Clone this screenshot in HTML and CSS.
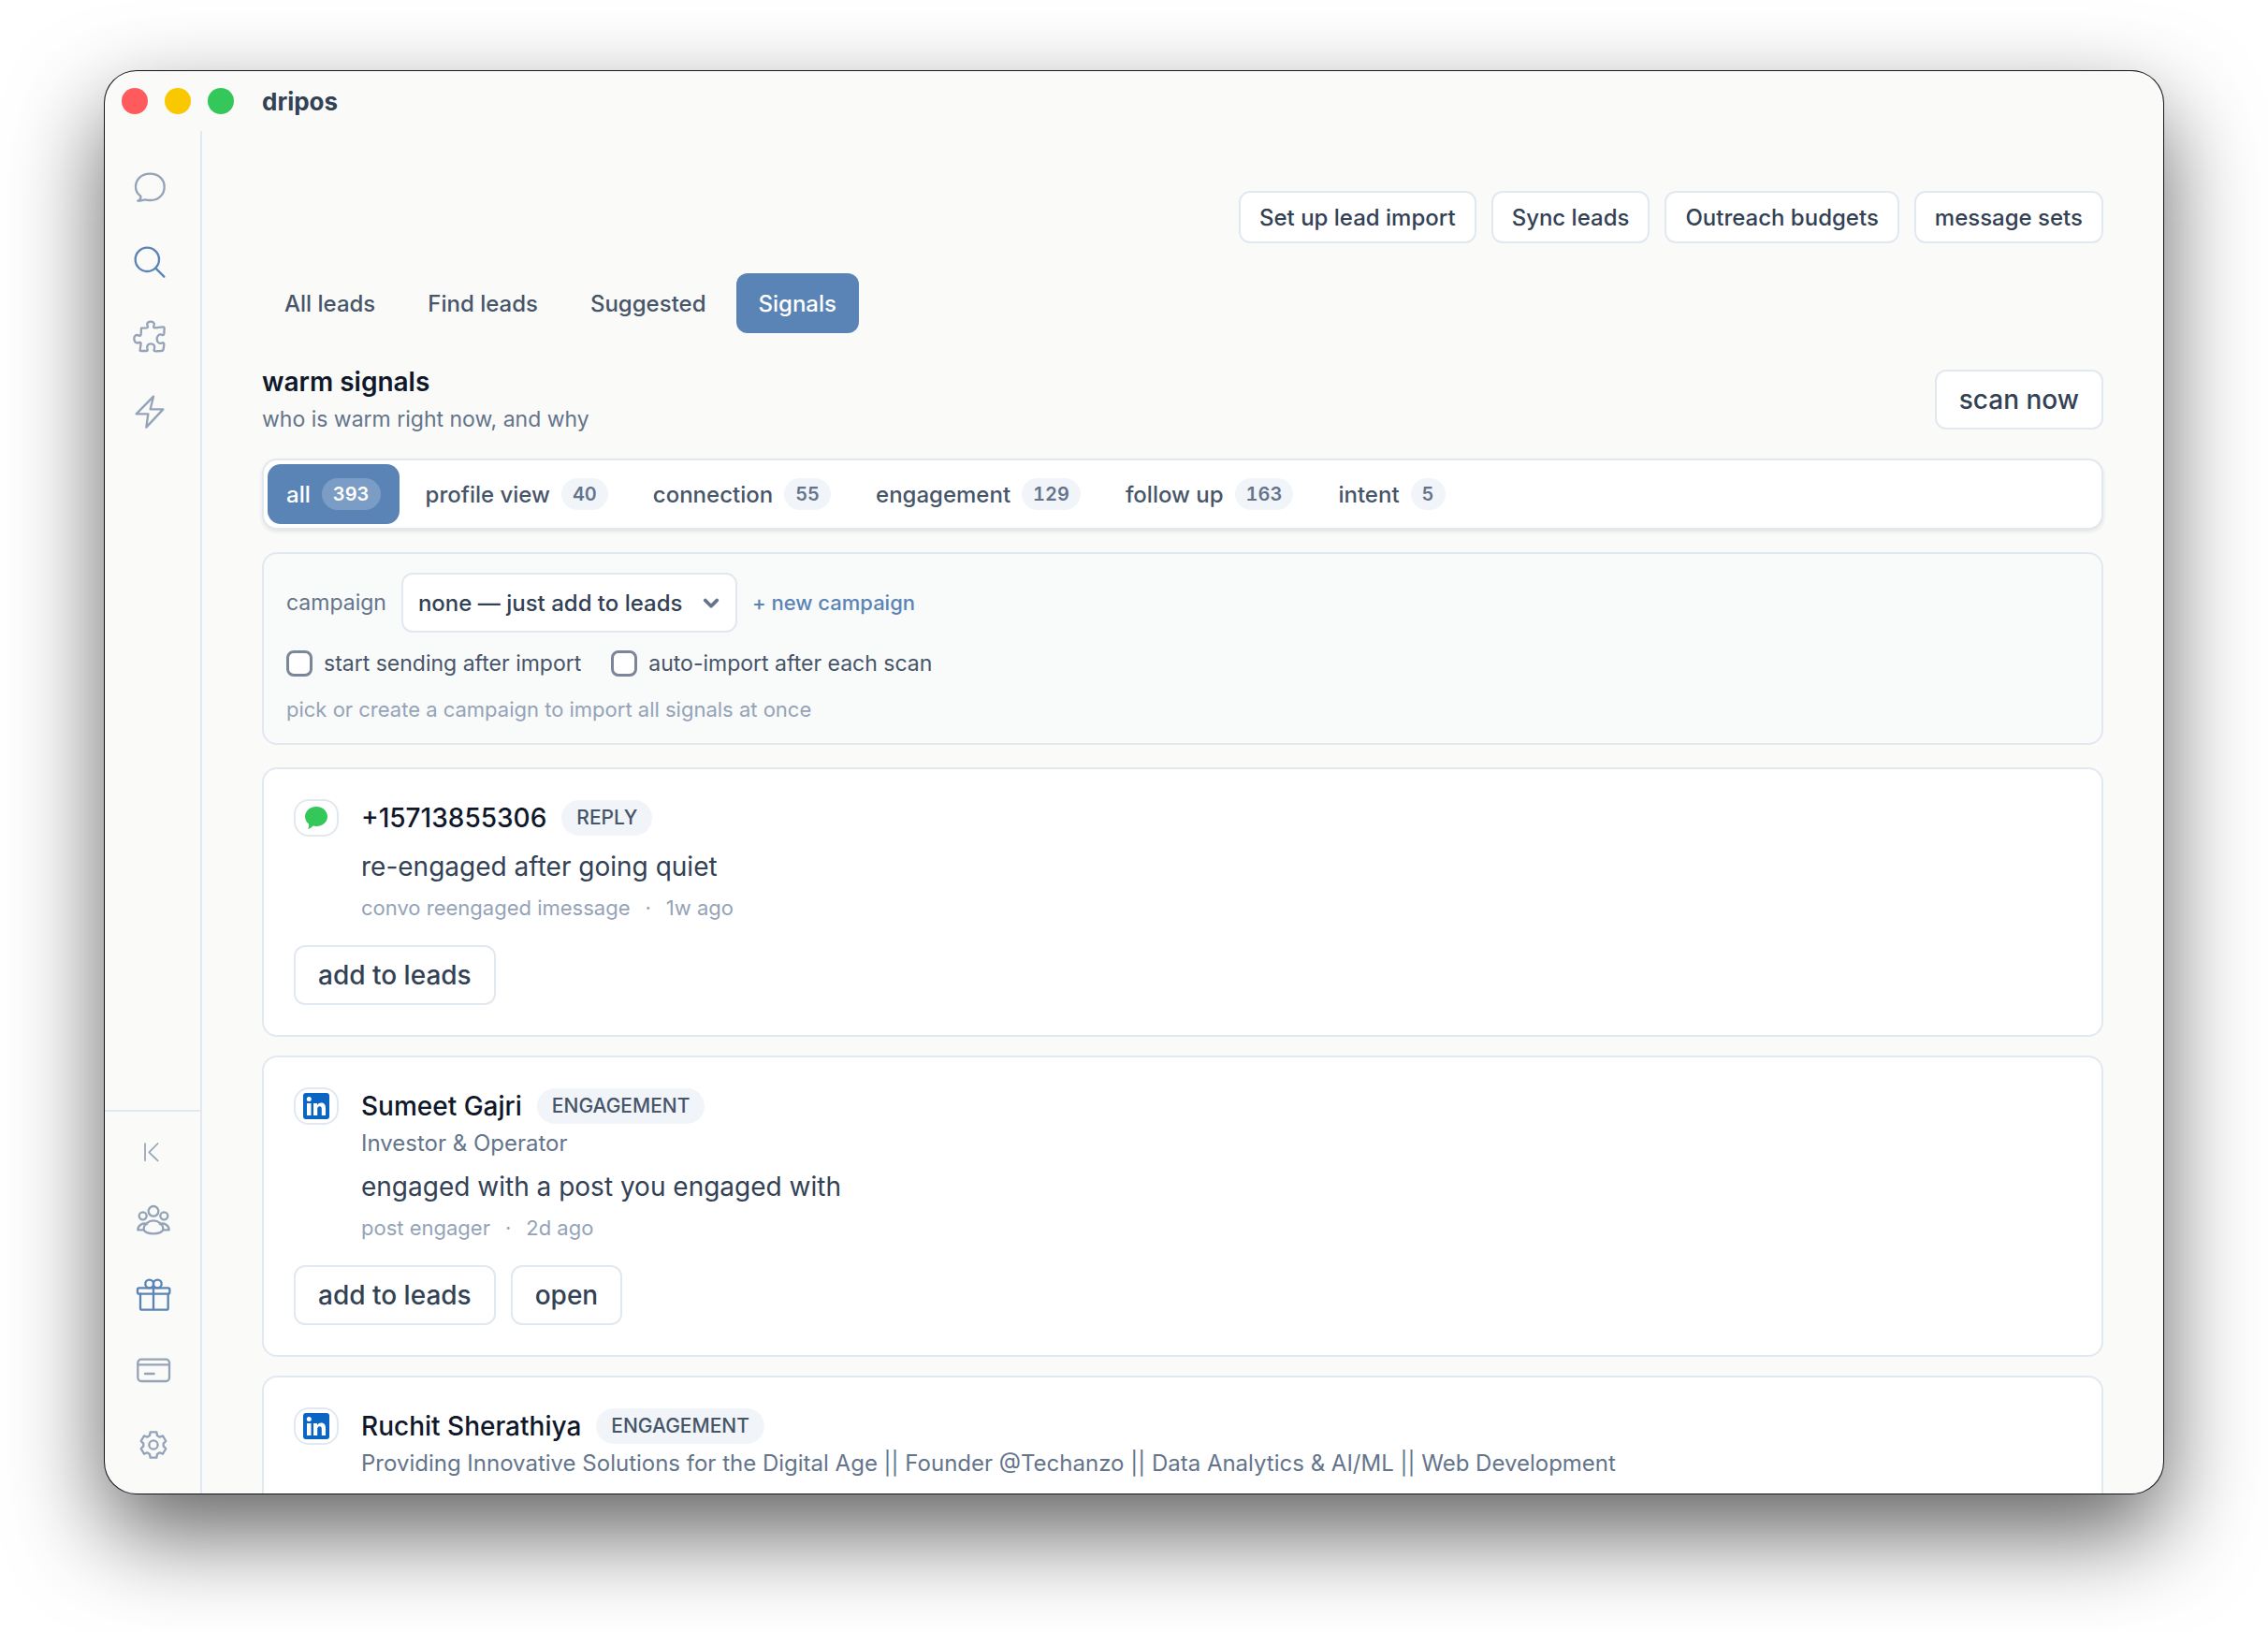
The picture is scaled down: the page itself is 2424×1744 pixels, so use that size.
FILE: index.html
```
<!DOCTYPE html>
<html lang="en">
<head>
  <meta charset="UTF-8" />
  <meta name="viewport" content="width=device-width, initial-scale=1" />
  <title>dripos</title>
  <link rel="stylesheet" href="styles.css">
</head>
<body>
  <div class="window">
    <header class="titlebar">
      <div class="traffic">
        <span class="dot red"></span>
        <span class="dot yellow"></span>
        <span class="dot green"></span>
      </div>
      <span class="app-name">dripos</span>
    </header>

    <div class="layout">
      <aside class="sidebar">
        <nav class="nav-top">
          <button class="nav-btn" aria-label="Chat">
            <svg viewBox="0 0 108 108"><path d="M16 98C24 99 32 94 40 94C46 96 50 96 56 96C84 96 101 76 101 53C101 28 82 11 55 11C28 11 9 28 9 54C9 66 16 76 25 83C26 90 22 96 16 98Z"/></svg>
          </button>
          <button class="nav-btn active" aria-label="Leads">
            <svg viewBox="0 0 108 108"><circle cx="46" cy="46" r="38"/><path d="M73 74L100 101"/></svg>
          </button>
          <button class="nav-btn" aria-label="Integrations">
            <svg viewBox="0 0 108 108"><path d="M27 26L44 25C50 24 48 20 46 16C44 8 52 5 57 5C64 5 70 9 68 16C66 21 65 25 70 25L97 22C101 22 101 24 101 27L100 44C99 50 96 49 92 47C84 44 77 52 77 61C77 70 84 77 92 74C96 72 100 72 100 78L98 94C97 99 95 99 92 99L72 100C67 100 67 96 69 92C72 82 66 76 57 76C49 76 44 82 46 91C48 96 48 99 44 99L26 99C23 99 22 97 23 95L26 75C26 70 22 71 18 73C9 75 4 68 4 60C4 51 10 46 18 49C22 51 26 51 26 46Z"/></svg>
          </button>
          <button class="nav-btn" aria-label="Automations">
            <svg viewBox="0 0 108 108"><path d="M66 5L11 61H49L43 104L97 46H56Z"/></svg>
          </button>
        </nav>
        <div class="nav-bottom">
          <button class="nav-btn collapse" aria-label="Collapse sidebar">
            <svg viewBox="0 0 108 108"><path d="M27 27V82M68 27L40 55L68 82"/></svg>
          </button>
          <button class="nav-btn" aria-label="Team">
            <svg viewBox="0 0 108 108"><circle cx="54" cy="25" r="16"/><circle cx="20" cy="40" r="12"/><circle cx="88" cy="40" r="12"/><path d="M54 55C70 55 85 68 85 82C85 92 70 97 54 97C38 97 23 92 23 82C23 68 38 55 54 55Z"/><path d="M33 66C19 61 4 70 4 85H24M75 66C89 61 104 70 104 85H84"/></svg>
          </button>
          <button class="nav-btn active" aria-label="Rewards">
            <svg viewBox="0 0 108 108"><rect x="3" y="31" width="103" height="19" rx="5"/><path d="M12 50V95Q12 101 18 101H95Q101 101 101 95V50M54 31V101"/><circle cx="41" cy="18" r="13"/><circle cx="67" cy="18" r="13"/></svg>
          </button>
          <button class="nav-btn" aria-label="Billing">
            <svg viewBox="0 0 108 108"><rect x="4" y="20" width="101" height="70" rx="11"/><path d="M4 37H105M27 66H56"/></svg>
          </button>
          <button class="nav-btn" aria-label="Settings">
            <svg viewBox="0 0 108 108"><path d="M44 13H64L66 24L74 29L84 25L94 42L86 50V58L94 66L84 83L74 79L66 84L64 95H44L42 84L34 79L24 83L14 66L22 58V50L14 42L24 25L34 29L42 24Z"/><circle cx="54" cy="54" r="14"/></svg>
          </button>
        </div>
      </aside>

      <main class="main">
        <div class="actions">
          <button class="btn btn-sm">Set up lead import</button>
          <button class="btn btn-sm">Sync leads</button>
          <button class="btn btn-sm">Outreach budgets</button>
          <button class="btn btn-sm">message sets</button>
        </div>

        <div class="tabs">
          <button class="tab">All leads</button>
          <button class="tab">Find leads</button>
          <button class="tab">Suggested</button>
          <button class="tab active">Signals</button>
        </div>

        <div class="section-head">
          <div>
            <h1>warm signals</h1>
            <p>who is warm right now, and why</p>
          </div>
          <button class="btn">scan now</button>
        </div>

        <div class="filters">
          <button class="filter active">all <span class="count">393</span></button>
          <button class="filter">profile view <span class="count">40</span></button>
          <button class="filter">connection <span class="count">55</span></button>
          <button class="filter">engagement <span class="count">129</span></button>
          <button class="filter">follow up <span class="count">163</span></button>
          <button class="filter">intent <span class="count">5</span></button>
        </div>

        <section class="panel">
          <div class="campaign-row">
            <label for="campaign">campaign</label>
            <div class="select-wrap">
              <select id="campaign">
                <option>none — just add to leads</option>
              </select>
              <svg class="chevron" viewBox="0 0 16 16"><path d="M3 6L8 11L13 6"/></svg>
            </div>
            <a href="#">+ new campaign</a>
          </div>
          <div class="check-row">
            <label class="check"><input type="checkbox"> start sending after import</label>
            <label class="check"><input type="checkbox"> auto-import after each scan</label>
          </div>
          <p class="hint">pick or create a campaign to import all signals at once</p>
        </section>

        <div class="cards">
          <article class="card">
            <div class="card-top">
              <span class="source">
                <svg viewBox="0 0 24 24"><path fill="#34c759" d="M12 0C18.600 0 24 4.700 24 10.500C24 16.500 18.600 21 12 21C10.700 21 9.600 20.800 8.500 20.500C7 22.300 5 23.500 3 24C4 22.500 4.400 20.500 4 18.500C1.500 16.600 0 13.700 0 10.500C0 4.700 5.400 0 12 0Z"/></svg>
              </span>
              <h2>+15713855306</h2>
              <span class="tag">REPLY</span>
            </div>
            <div class="card-body">
              <p class="reason">re-engaged after going quiet</p>
              <p class="meta"><span>convo reengaged imessage</span><span>·</span><span>1w ago</span></p>
            </div>
            <div class="card-actions">
              <button class="btn">add to leads</button>
            </div>
          </article>

          <article class="card">
            <div class="card-top">
              <span class="source">
                <svg class="linkedin" viewBox="0 0 28 28"><rect width="28" height="28" rx="3" fill="#0a66c2"/><circle cx="6.300" cy="6.500" r="2.500" fill="#fff"/><path fill="#fff" d="M4 11H8.500V24H4ZM11 11H15V13C16 11.300 17.500 10.500 19.300 10.500C23 10.500 24 13 24 16.500V24H19.800V17.300C19.800 15.500 19.500 14.200 17.800 14.200C16 14.200 15.200 15.500 15.200 17.300V24H11Z"/></svg>
              </span>
              <h2>Sumeet Gajri</h2>
              <span class="tag">ENGAGEMENT</span>
            </div>
            <div class="card-body">
              <p class="headline">Investor &amp; Operator</p>
              <p class="reason">engaged with a post you engaged with</p>
              <p class="meta"><span>post engager</span><span>·</span><span>2d ago</span></p>
            </div>
            <div class="card-actions">
              <button class="btn">add to leads</button>
              <button class="btn">open</button>
            </div>
          </article>

          <article class="card">
            <div class="card-top">
              <span class="source">
                <svg class="linkedin" viewBox="0 0 28 28"><rect width="28" height="28" rx="3" fill="#0a66c2"/><circle cx="6.300" cy="6.500" r="2.500" fill="#fff"/><path fill="#fff" d="M4 11H8.500V24H4ZM11 11H15V13C16 11.300 17.500 10.500 19.300 10.500C23 10.500 24 13 24 16.500V24H19.800V17.300C19.800 15.500 19.500 14.200 17.800 14.200C16 14.200 15.200 15.500 15.200 17.300V24H11Z"/></svg>
              </span>
              <h2>Ruchit Sherathiya</h2>
              <span class="tag">ENGAGEMENT</span>
            </div>
            <div class="card-body">
              <p class="headline">Providing Innovative Solutions for the Digital Age || Founder @Techanzo || Data Analytics &amp; AI/ML || Web Development</p>
            </div>
          </article>
        </div>
      </main>
    </div>
  </div>
</body>
</html>
```
FILE: styles.css
```
* {
  box-sizing: border-box;
}

body {
  margin: 0;
  height: 100vh;
  padding: 76px 112px 148px;
  background: #fff;
  font-family: Inter, sans-serif;
  font-size: 24px;
  color: #334155;
}

h1,
h2,
p {
  margin: 0;
}

button,
select {
  font-family: inherit;
  cursor: pointer;
}

.window {
  height: 100%;
  display: flex;
  flex-direction: column;
  background: #fafaf9;
  border-radius: 34px;
  overflow: hidden;
  box-shadow: 0 0 0 1px #14161c, 0 42px 100px rgba(0, 0, 0, 0.62);
}

/* title bar */
.titlebar {
  flex: none;
  height: 64px;
  display: flex;
  align-items: center;
  padding-left: 18px;
}

.traffic {
  display: flex;
  gap: 18px;
  width: 150px;
}

.dot {
  width: 28px;
  height: 28px;
  border-radius: 50%;
}

.red {
  background: #ff5a5c;
}

.yellow {
  background: #fac800;
}

.green {
  background: #34c759;
}

.app-name {
  font-size: 26px;
  font-weight: 700;
}

.layout {
  flex: 1;
  min-height: 0;
  display: flex;
}

/* sidebar */
.sidebar {
  flex: none;
  width: 104px;
  border-right: 2px solid #e2e8f0;
  display: flex;
  flex-direction: column;
  justify-content: space-between;
}

.nav-top {
  width: 96px;
  padding-top: 20px;
}

.nav-bottom {
  border-top: 2px solid #e2e8f0;
  padding: 10px 0 12px 2px;
}

.nav-btn {
  width: 100%;
  height: 80px;
  padding: 0;
  border: none;
  background: none;
  display: flex;
  align-items: center;
  justify-content: center;
  color: #94a3b8;
}

.nav-btn.active {
  color: #5b84b6;
}

.nav-btn.collapse {
  height: 66px;
}

.nav-btn svg {
  width: 36px;
  height: 36px;
  fill: none;
  stroke: currentColor;
  stroke-width: 7;
  stroke-linecap: round;
  stroke-linejoin: round;
  overflow: visible;
}

.nav-btn.collapse svg {
  stroke-width: 5;
}

/* main */
.main {
  flex: 1;
  min-width: 0;
  padding: 64px 64px 0;
  overflow: hidden;
}

.btn {
  height: 64px;
  padding: 0 24px;
  border: 2px solid #e2e8f0;
  border-radius: 12px;
  background: #fff;
  color: #334155;
  font-size: 28px;
  font-weight: 500;
}

.btn-sm {
  height: 56px;
  padding: 0 20px;
  font-size: 24px;
}

.actions {
  display: flex;
  justify-content: flex-end;
  gap: 16px;
}

.tabs {
  display: flex;
  gap: 8px;
  margin: 32px 0;
}

.tab {
  height: 64px;
  padding: 0 24px;
  border: none;
  border-radius: 12px;
  background: none;
  color: #475569;
  font-size: 24px;
  font-weight: 500;
}

.tab.active {
  background: #5b84b6;
  color: #fff;
}

.section-head {
  display: flex;
  align-items: center;
  justify-content: space-between;
}

.section-head h1 {
  font-size: 28px;
  line-height: 40px;
  font-weight: 600;
  color: #0f172a;
}

.section-head p {
  margin-top: 2px;
  font-size: 23px;
  line-height: 36px;
  color: #64748b;
}

.filters {
  display: flex;
  gap: 8px;
  margin: 24px 0;
  padding: 4px;
  border: 2px solid #e2e8f0;
  border-radius: 16px;
  background: #fff;
  box-shadow: 0 2px 4px rgba(15, 23, 42, 0.1);
}

.filter {
  height: 64px;
  padding: 0 20px;
  border: none;
  border-radius: 14px;
  background: none;
  color: #475569;
  font-size: 24px;
  font-weight: 500;
  display: flex;
  align-items: center;
  gap: 12px;
}

.filter.active {
  background: #5b84b6;
  color: #fff;
}

.count {
  height: 34px;
  line-height: 34px;
  padding: 0 12px;
  border-radius: 17px;
  background: #f1f5f9;
  color: #64748b;
  font-size: 20px;
  font-weight: 600;
  font-variant-numeric: tabular-nums;
}

.filter.active .count {
  background: rgba(255, 255, 255, 0.2);
  color: #fff;
}

/* campaign panel */
.panel {
  padding: 20px 24px;
  border: 2px solid #e2e8f0;
  border-radius: 16px;
  background: #f9fafa;
}

.campaign-row {
  display: flex;
  align-items: center;
  gap: 16px;
}

.campaign-row label {
  font-size: 23px;
  color: #64748b;
}

.campaign-row a {
  font-size: 22px;
  font-weight: 500;
  color: #5b84b6;
  text-decoration: none;
}

.select-wrap {
  position: relative;
}

.select-wrap select {
  appearance: none;
  height: 64px;
  padding: 0 56px 0 16px;
  border: 2px solid #e2e8f0;
  border-radius: 12px;
  background: #fff;
  color: #334155;
  font-size: 24px;
  font-weight: 500;
}

.chevron {
  position: absolute;
  right: 18px;
  top: 22px;
  width: 20px;
  height: 20px;
  fill: none;
  stroke: #64748b;
  stroke-width: 3;
  stroke-linecap: round;
  stroke-linejoin: round;
  pointer-events: none;
}

.check-row {
  display: flex;
  gap: 32px;
  margin: 16px 0;
}

.check {
  display: flex;
  align-items: center;
  gap: 12px;
  font-size: 23px;
  line-height: 34px;
  color: #475569;
}

.check input {
  appearance: none;
  width: 28px;
  height: 28px;
  margin: 0;
  border: 3px solid #7b8799;
  border-radius: 8px;
  background: #fff;
}

.hint {
  font-size: 22px;
  line-height: 32px;
  color: #94a3b8;
}

/* signal cards */
.cards {
  display: flex;
  flex-direction: column;
  gap: 20px;
  margin-top: 24px;
}

.card {
  padding: 32px;
  border: 2px solid #e2e8f0;
  border-radius: 16px;
  background: #fff;
}

.card-top {
  display: flex;
  align-items: center;
  height: 40px;
}

.source {
  width: 48px;
  height: 40px;
  margin-right: 24px;
  border: 2px solid #e2e8f0;
  border-radius: 16px;
  display: flex;
  align-items: center;
  justify-content: center;
}

.source svg {
  width: 24px;
  height: 24px;
}

.source .linkedin {
  width: 28px;
  height: 28px;
}

.card h2 {
  font-size: 28px;
  font-weight: 500;
  color: #0f172a;
}

.tag {
  height: 38px;
  line-height: 38px;
  margin-left: 16px;
  padding: 0 16px;
  border-radius: 19px;
  background: #f1f5f9;
  color: #475569;
  font-size: 21px;
  font-weight: 500;
}

.card-body {
  padding-left: 72px;
}

.headline {
  margin-top: 2px;
  line-height: 36px;
  color: #64748b;
}

.reason {
  margin-top: 12px;
  font-size: 28px;
  line-height: 40px;
}

.headline + .reason {
  margin-top: 8px;
}

.meta {
  display: flex;
  gap: 16px;
  margin-top: 8px;
  font-size: 22px;
  line-height: 32px;
  color: #94a3b8;
}

.card-actions {
  display: flex;
  gap: 16px;
  margin-top: 24px;
}
```
